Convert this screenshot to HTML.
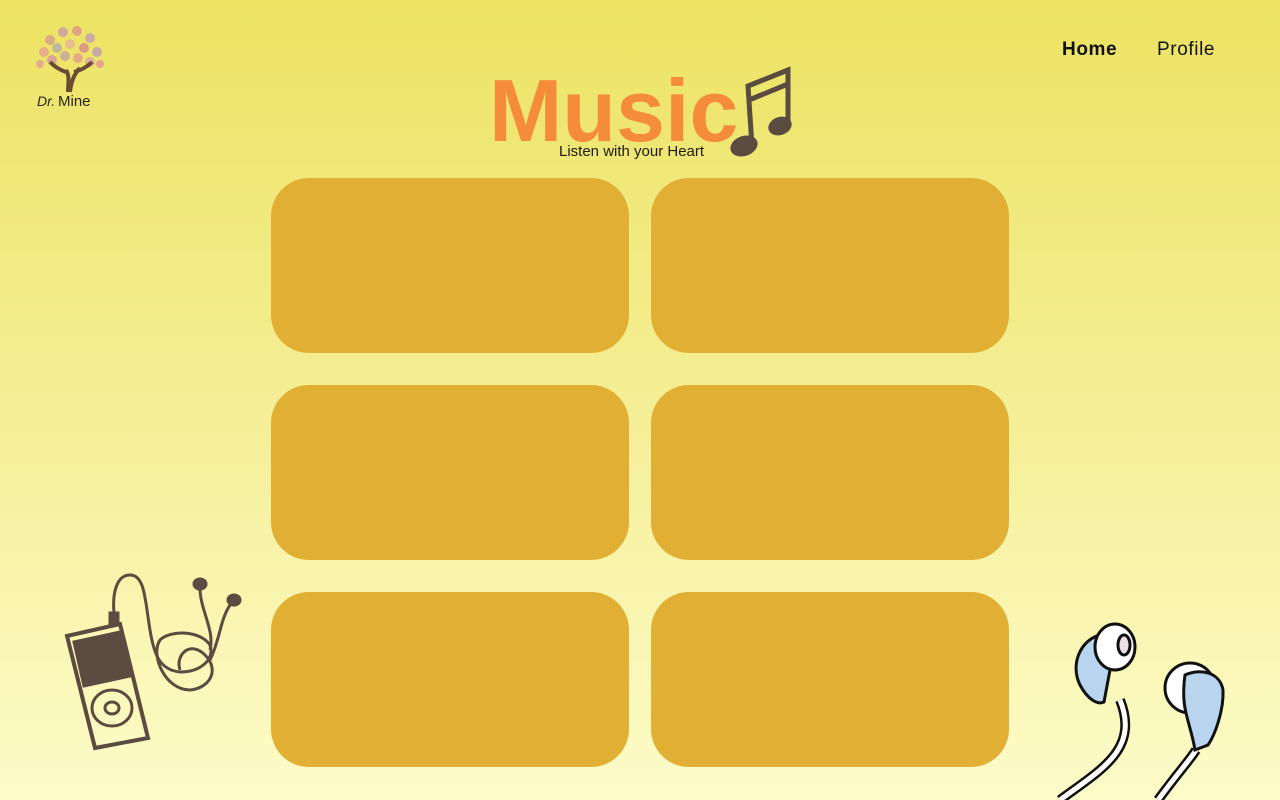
<!DOCTYPE html>
<html><head><meta charset="utf-8"><style>
html,body{margin:0;padding:0}
body{width:1280px;height:800px;overflow:hidden;position:relative;background:linear-gradient(#ece362 0%,#f3ec8a 40%,#fdfbc9 100%);font-family:"Liberation Sans",sans-serif}
.card{position:absolute;width:358px;height:175px;background:#e0af34;border-radius:38px}
.nav{position:absolute;top:39px;font-size:19px;color:#111;letter-spacing:0.6px}
</style></head><body>
<svg style="position:absolute;left:30px;top:22px" width="80" height="92" viewBox="0 0 80 92">
<g opacity=".85">
<circle cx="20" cy="18" r="5" fill="#d9a28c"/><circle cx="33" cy="10" r="5" fill="#c9a0a8"/><circle cx="47" cy="9" r="5" fill="#e29a8a"/><circle cx="60" cy="16" r="5" fill="#c7a4b0"/><circle cx="14" cy="30" r="5" fill="#e6a38f"/><circle cx="27" cy="26" r="5" fill="#b9b2a2"/><circle cx="40" cy="22" r="5" fill="#e7b79a"/><circle cx="54" cy="26" r="5" fill="#d88f8a"/><circle cx="67" cy="30" r="5" fill="#c0a0b0"/><circle cx="10" cy="42" r="4" fill="#e3a293"/><circle cx="22" cy="38" r="5" fill="#d49c9a"/><circle cx="35" cy="34" r="5" fill="#c8aaa0"/><circle cx="48" cy="36" r="5" fill="#e6a08d"/><circle cx="60" cy="40" r="5" fill="#d9a8a0"/><circle cx="70" cy="42" r="4" fill="#e39a90"/></g>
<path d="M38 70 C38 60 40 55 36 48 M40 70 C41 60 44 52 50 46 M36 50 C30 48 24 44 20 40 M44 50 C52 48 58 44 62 40" stroke="#6b4a35" stroke-width="4" fill="none"/>
<text x="7" y="84" font-size="14" fill="#2a2418" font-style="italic">Dr.</text><text x="28" y="84" font-size="15" fill="#2a2418">Mine</text>
</svg>
<div class="nav" style="left:1062px;font-weight:bold">Home</div>
<div class="nav" style="left:1157px">Profile</div>
<div style="position:absolute;left:489px;top:56px;font-size:88px;font-weight:bold;color:#f48c3c;letter-spacing:0px;line-height:110px">Music</div>
<div style="position:absolute;left:559px;top:143px;font-size:15px;color:#1e1a10">Listen with your Heart</div>
<svg style="position:absolute;left:728px;top:66px" width="66" height="94" viewBox="0 0 66 94">
<path d="M24 80 L20 20 L60 4 L60 58 M21 34 L60 18" stroke="#5c4b40" stroke-width="5" fill="none"/>
<ellipse cx="16" cy="80" rx="14" ry="10" fill="#5c4b40" transform="rotate(-20 16 80)"/>
<ellipse cx="52" cy="60" rx="12" ry="9" fill="#5c4b40" transform="rotate(-20 52 60)"/>
</svg>
<div class="card" style="left:271px;top:178px"></div>
<div class="card" style="left:651px;top:178px"></div>
<div class="card" style="left:271px;top:385px"></div>
<div class="card" style="left:651px;top:385px"></div>
<div class="card" style="left:271px;top:592px"></div>
<div class="card" style="left:651px;top:592px"></div>
<svg style="position:absolute;left:50px;top:560px" width="200" height="200" viewBox="0 0 200 200" fill="none" stroke="#5c4b40" stroke-width="3">
<path d="M17 76 L70 64 L98 178 L45 188 Z" stroke-width="4"/>
<path d="M24 82 L70 72 L80 116 L34 126 Z" fill="#5c4b40"/>
<ellipse cx="62" cy="148" rx="20" ry="18"/><ellipse cx="62" cy="148" rx="7" ry="6"/>
<rect x="60" y="53" width="8" height="12" fill="#5c4b40"/>
<path d="M64 53 C62 30 68 15 80 15 C95 15 95 40 100 70 C104 95 110 110 130 112 C150 112 165 100 160 85 C150 70 120 70 110 80 C100 95 115 130 140 130 C160 128 170 110 155 95 C140 80 125 95 130 110 M160 90 C165 70 150 50 150 28 M160 100 C170 80 170 60 180 45"/>
<ellipse cx="150" cy="24" rx="6" ry="5" fill="#5c4b40"/><ellipse cx="184" cy="40" rx="6" ry="5" fill="#5c4b40"/>
</svg>
<svg style="position:absolute;left:1040px;top:610px" width="200" height="190" viewBox="0 0 200 190" stroke="#111" stroke-width="3">
<path d="M20 190 C60 160 100 140 80 90" stroke-width="10" stroke="#111" fill="none"/><path d="M20 190 C60 160 100 140 80 90" stroke-width="5" stroke="#fff" fill="none"/>
<path d="M118 190 C140 160 150 150 156 140" stroke-width="10" stroke="#111" fill="none"/><path d="M118 190 C140 160 150 150 156 140" stroke-width="5" stroke="#fff" fill="none"/>
<path d="M60 25 C40 30 30 55 40 75 C48 90 58 95 64 92 L70 60 Z" fill="#b8d4ee"/>
<ellipse cx="75" cy="37" rx="20" ry="23" fill="#fff"/><ellipse cx="84" cy="35" rx="6" ry="10" fill="#eee0e6"/>
<ellipse cx="150" cy="78" rx="25" ry="25" fill="#fff"/>
<path d="M145 65 C160 58 180 62 183 80 C184 100 175 125 168 135 L155 140 C150 110 140 100 145 65 Z" fill="#b8d4ee"/>
</svg>
</body></html>
